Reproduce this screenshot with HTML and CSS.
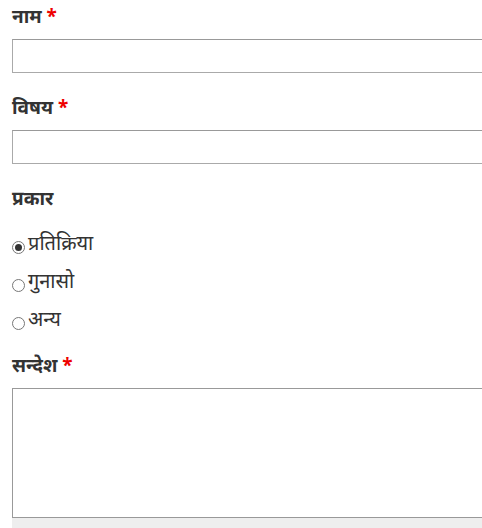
FILE: index.html
```html
<!DOCTYPE html>
<html lang="ne">
<head>
<meta charset="utf-8">
<link rel="stylesheet" href="styles.css">
</head>
<body>
<form class="form">
  <div class="field">
    <label class="label">नाम <span class="req">*</span></label>
    <input class="input" type="text">
  </div>
  <div class="field">
    <label class="label">विषय <span class="req">*</span></label>
    <input class="input" type="text">
  </div>
  <div class="field field-radios">
    <div class="label">प्रकार</div>
    <div class="radios">
      <label class="radio"><input type="radio" name="t" checked><span>प्रतिक्रिया</span></label>
      <label class="radio"><input type="radio" name="t"><span>गुनासो</span></label>
      <label class="radio"><input type="radio" name="t"><span>अन्य</span></label>
    </div>
  </div>
  <div class="field field-last">
    <label class="label">सन्देश <span class="req">*</span></label>
    <textarea class="textarea"></textarea>
  </div>
  <div class="footer"></div>
</form>
</body>
</html>
```
FILE: styles.css
```css
html, body {
  margin: 0;
  padding: 0;
  overflow: hidden;
  background: #fff;
}
body {
  font-family: "Noto Sans", "Open Sans", sans-serif;
  color: #333;
}
.form {
  padding: 4px 0 0 12px;
  width: 500px;
}
.field {
  margin-bottom: 22px;
}
.field-radios {
  margin-bottom: 20px;
}
.field-last {
  margin-bottom: 0;
}
.label {
  display: block;
  font-size: 19px;
  font-weight: bold;
  line-height: 24px;
  margin-bottom: 11px;
}
.req {
  color: #e00;
}
.input {
  display: block;
  box-sizing: border-box;
  width: 490px;
  height: 34px;
  margin: 0;
  border: 1px solid #aaa;
  border-top-color: #999;
  background: #fff;
}
.radios {
  display: flex;
  flex-direction: column;
  gap: 12px;
  padding-top: 10px;
}
.radio {
  display: flex;
  align-items: center;
  font-size: 20px;
  line-height: 26px;
}
.radio span {
  position: relative;
  top: -1px;
}
.radio input {
  appearance: none;
  -webkit-appearance: none;
  box-sizing: border-box;
  width: 13px;
  height: 13px;
  margin: 6px 3px 0 0;
  border: 1px solid #777;
  border-radius: 50%;
  background: #fff;
  display: grid;
  place-content: center;
  flex-shrink: 0;
}
.radio input:checked::before {
  content: "";
  width: 7px;
  height: 7px;
  border-radius: 50%;
  background: #333;
}
.textarea {
  display: block;
  box-sizing: border-box;
  width: 490px;
  height: 130px;
  margin: 0;
  border: 1px solid #999;
  resize: none;
}
.footer {
  height: 20px;
  background: #eee;
}
```
